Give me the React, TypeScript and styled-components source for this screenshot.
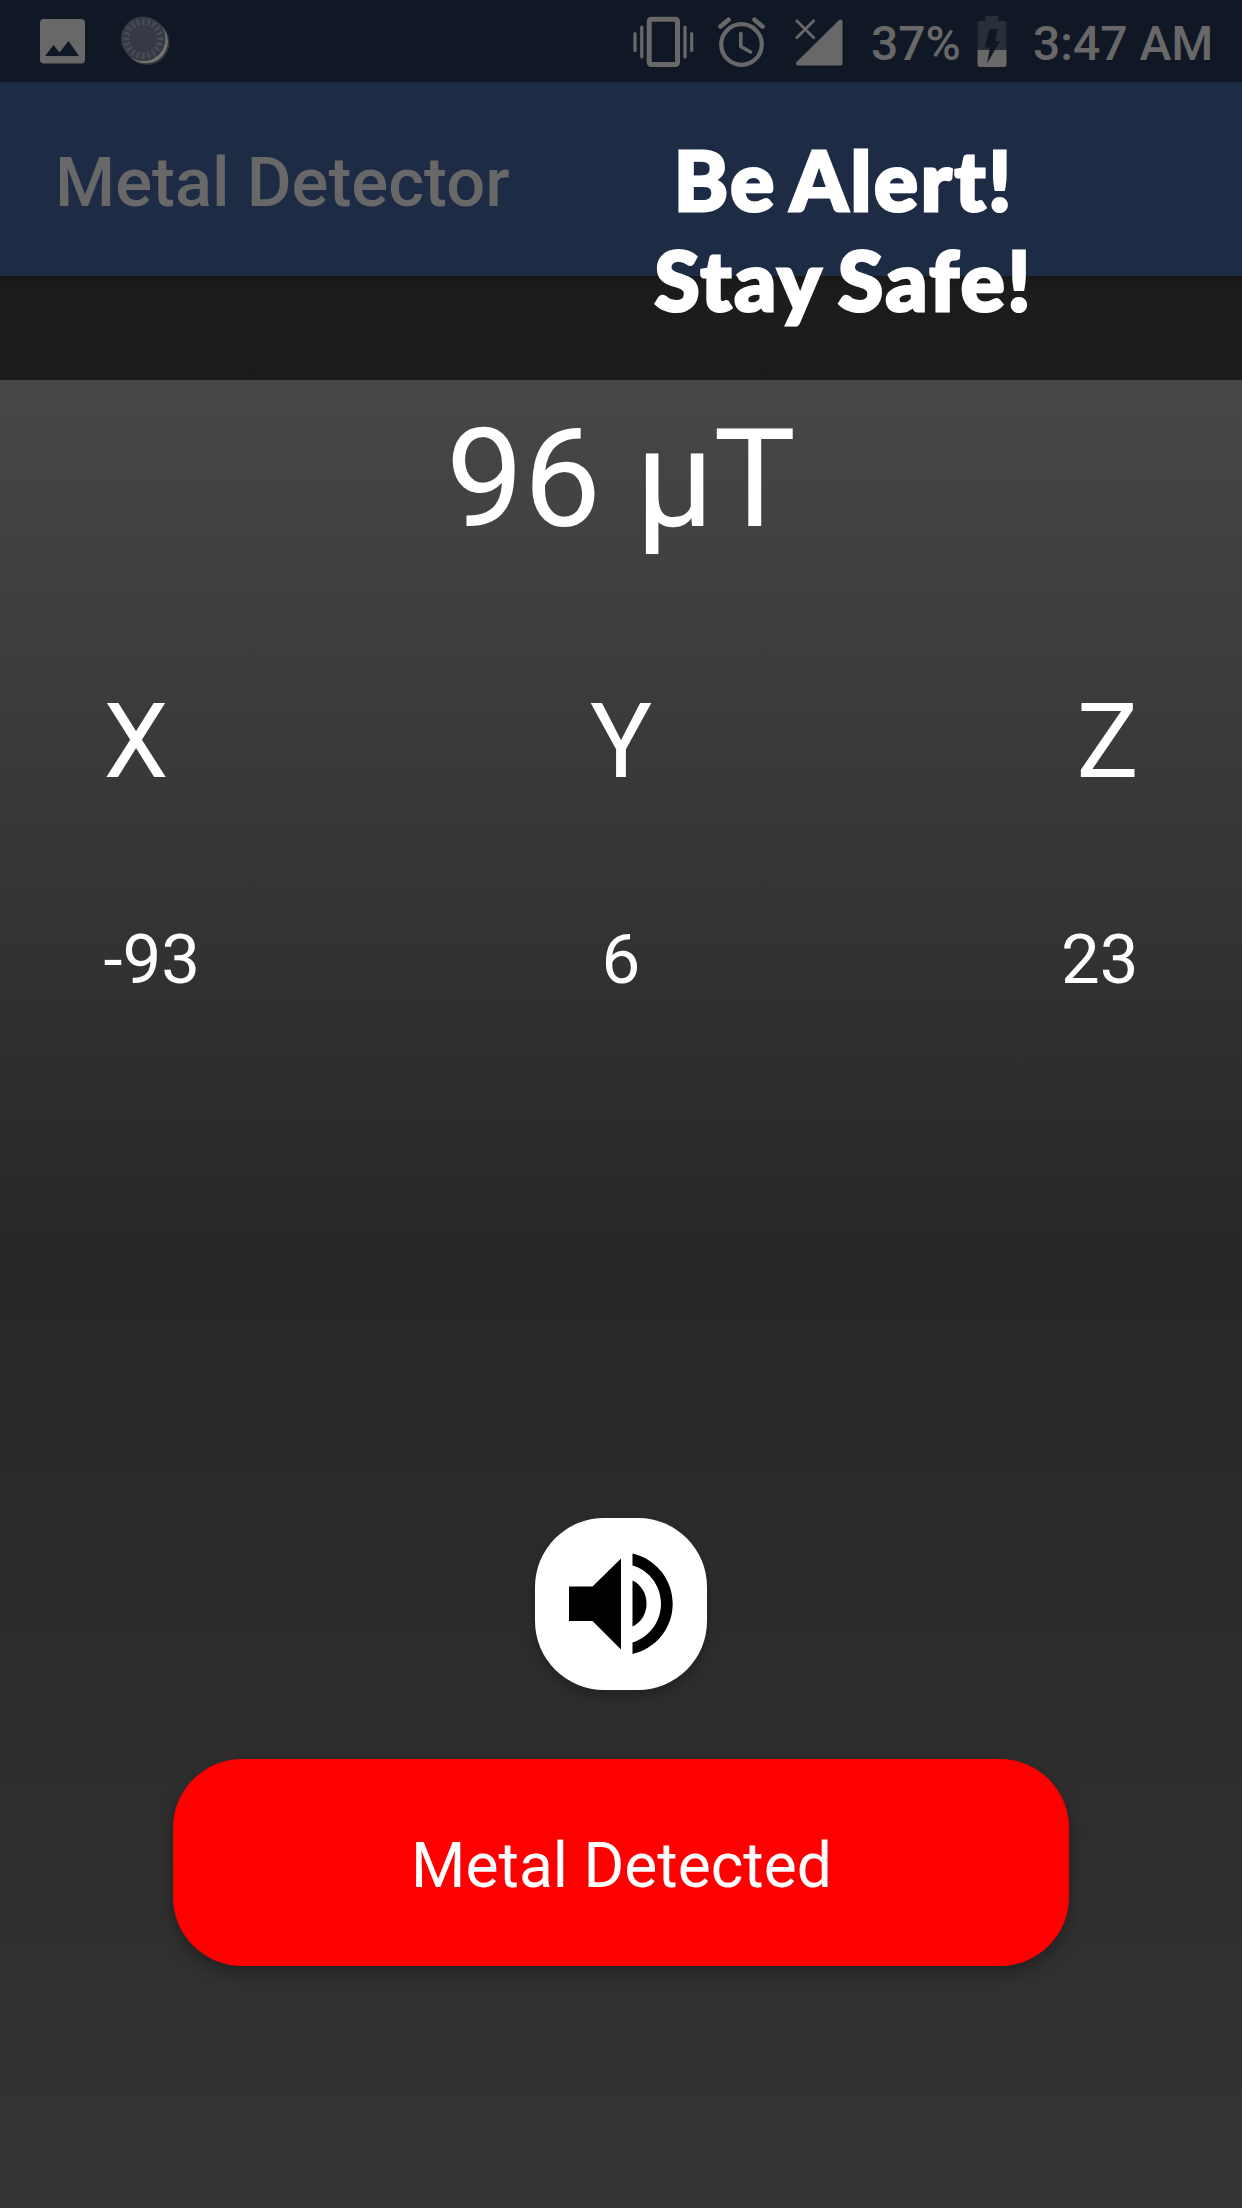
import React from "react";
import styled, { createGlobalStyle } from "styled-components";

const Global = createGlobalStyle`
  *, *::before, *::after { box-sizing: border-box; }
  body { margin: 0; background: #1c1c1c; font-family: Roboto, "Noto Sans", sans-serif; }
`;

const Screen = styled.div`
  position: relative;
  display: flex;
  flex-direction: column;
  width: 1242px;
  height: 2208px;
  overflow: hidden;
  background: #1c1c1c;
`;

const StatusBar = styled.header`
  display: flex;
  align-items: center;
  justify-content: space-between;
  flex: none;
  height: 82px;
  padding: 0 28px 0 40px;
  background: #111825;
  color: #686868;
`;

const StatusGroup = styled.div`
  display: flex;
  align-items: center;
`;

const Glyph = styled.svg<{ $w: number; $gap?: number }>`
  display: block;
  flex: none;
  width: ${(p) => p.$w}px;
  height: 82px;
  margin-right: ${(p) => p.$gap ?? 0}px;
`;

const StatusText = styled.span<{ $gap?: number; $width: number }>`
  width: ${(p) => p.$width}px;
  margin-right: ${(p) => p.$gap ?? 0}px;
  padding-top: 5px;
  font-size: 48px;
  font-weight: 500;
  line-height: 60px;
  white-space: nowrap;
`;

const AppBar = styled.div`
  display: flex;
  align-items: center;
  flex: none;
  height: 194px;
  padding: 7px 56px 0 55px;
  background: #1e2b44;
`;

const Title = styled.h1`
  margin: 0;
  color: #686868;
  font-size: 68.8px;
  font-weight: 500;
  line-height: 84px;
  white-space: nowrap;
`;

const Notice = styled.div`
  position: absolute;
  top: 129px;
  left: 594px;
  width: 500px;
  color: #fff;
  font-family: Lato, sans-serif;
  font-size: 82px;
  font-weight: 900;
  letter-spacing: 2.7px;
  word-spacing: -6px;
  line-height: 100px;
  text-align: center;
  white-space: nowrap;
  -webkit-text-stroke: 3px #fff;
`;

const Strip = styled.div`
  flex: none;
  height: 104px;
  background: linear-gradient(#181818, #1c1c1c 12px, #1b1b1b);
`;

const Panel = styled.main`
  display: flex;
  flex-direction: column;
  align-items: center;
  flex: 1;
  background: linear-gradient(#474747 0%, #272727 48%, #343434 100%);
`;

const Reading = styled.div`
  margin-top: 17px;
  color: #fff;
  font-size: 138px;
  line-height: 164px;
  white-space: nowrap;
`;

const Axes = styled.div<{ $size: number; $top: number; $line: number }>`
  display: grid;
  grid-template-columns: 1fr auto 1fr;
  width: 1035px;
  margin-top: ${(p) => p.$top}px;
  color: #fff;
  font-size: ${(p) => p.$size}px;
  line-height: ${(p) => p.$line}px;

  & > :last-child { text-align: right; }
`;

const SoundButton = styled.button`
  display: flex;
  align-items: center;
  justify-content: center;
  width: 172px;
  height: 172px;
  margin-top: 517px;
  padding: 0;
  border: 0;
  border-radius: 69px;
  background: #fff;
  box-shadow: 0 6px 12px rgba(0, 0, 0, 0.24);
`;

const Alarm = styled.button`
  width: 896px;
  height: 207px;
  margin-top: 69px;
  padding: 6px 0 0 1px;
  border: 0;
  border-radius: 69px;
  background: #f00;
  box-shadow: 0 7px 16px rgba(0, 0, 0, 0.32);
  color: #fff;
  font: 400 62.3px/72px Roboto, sans-serif;
`;

const ticks = Array.from({ length: 20 }, (_, i) => i * 18);

const PictureIcon = () => (
  <Glyph $w={45} $gap={35} viewBox="0 0 45 82">
    <path
      fill="currentColor"
      fillRule="evenodd"
      d="M4 19H41Q45 19 45 23V59.500Q45 63.500 41 63.500H4Q0 63.500 0 59.500V23Q0 19 4 19ZM5 56H39L28.500 41L19.500 52.500L13.500 45Z"
    />
  </Glyph>
);

const SpinnerIcon = () => (
  <Glyph $w={50} viewBox="0 0 50 82">
    <circle cx="27" cy="42.500" r="22.500" fill="#30343e" />
    <circle cx="26" cy="41.500" r="21.800" fill="#74746f" />
    <circle cx="23.300" cy="38.800" r="22.300" fill="#353a45" />
    {ticks.map((a) => (
      <path key={a} d="M23.300 18.500V25" stroke="#474b55" strokeWidth="2.600" transform={`rotate(${a} 23.300 38.800)`} />
    ))}
  </Glyph>
);

const VibrateIcon = () => (
  <Glyph $w={61} $gap={24} viewBox="0 0 61 82">
    <rect x="16.200" y="19.200" width="28.300" height="45.300" rx="2" fill="none" stroke="currentColor" strokeWidth="5" />
    <path d="M2 33.500V50.500M8.800 27V57M52 27V57M58.700 33.500V50.500" stroke="currentColor" strokeWidth="3.200" strokeLinecap="round" />
  </Glyph>
);

const AlarmClockIcon = () => (
  <Glyph $w={48} $gap={29} viewBox="0 0 48 82">
    <g fill="none" stroke="currentColor" strokeLinecap="round" strokeLinejoin="round">
      <circle cx="23.500" cy="44.500" r="20.300" strokeWidth="4.200" />
      <path d="M22.800 33.500V46.500L32.500 52" strokeWidth="3.600" />
      <path d="M2.500 26.500L10.500 19.800M44.500 26.500L36.500 19.800" strokeWidth="4.600" />
    </g>
  </Glyph>
);

const SignalIcon = () => (
  <Glyph $w={48} $gap={28} viewBox="0 0 48 82">
    <path d="M3 63.500L45.500 21.500V63.500Z" fill="currentColor" stroke="currentColor" strokeWidth="4" strokeLinejoin="round" />
    <path d="M1 20L20 39M20 20L1 39" fill="none" stroke="#111825" strokeWidth="5" />
    <path d="M1 20L19.500 38.500M19.500 20L1 38.500" fill="none" stroke="currentColor" strokeWidth="2.800" />
  </Glyph>
);

const BatteryIcon = () => (
  <Glyph $w={30} $gap={26} viewBox="0 0 30 82">
    <path d="M2 21H8.500V16H21V21H27Q29.500 21 29.500 23.500V50H.5V23.500Q.5 21 2 21Z" fill="#2a2e39" />
    <path d="M.5 50H29.500V64.500Q29.500 67 27 67H3Q.5 67 .5 64.500Z" fill="currentColor" />
    <path d="M12 29H21L18 41H23L10 63.500L13 47.500H8Z" fill="#111825" />
  </Glyph>
);

const SpeakerIcon = () => (
  <svg width="104" height="104" viewBox="0 0 104 104" fill="#000">
    <path d="M0 34.500H23.500L52 6.500V97.500L23.500 69H0Z" />
    <path d="M63.500 28.500C72.500 33 77.500 41.500 77.500 51.700C77.500 61.500 72.500 70 63.500 74.500Z" />
    <path d="M63.500 1.500C87 7 103.700 27.500 103.700 51.700C103.700 76 87 96.500 63.500 102V90.500C80.500 85 92 69.500 92 51.700C92 34 80.500 18.500 63.500 13.500Z" />
  </svg>
);

export default function App() {
  return (
    <Screen>
      <Global />
      <StatusBar>
        <StatusGroup>
          <PictureIcon />
          <SpinnerIcon />
        </StatusGroup>
        <StatusGroup>
          <VibrateIcon />
          <AlarmClockIcon />
          <SignalIcon />
          <StatusText $width={90} $gap={16}>37%</StatusText>
          <BatteryIcon />
          <StatusText $width={181}>3:47 AM</StatusText>
        </StatusGroup>
      </StatusBar>
      <AppBar>
        <Title>Metal Detector</Title>
      </AppBar>
      <Strip />
      <Notice>
        Be Alert!
        <br />
        Stay Safe!
      </Notice>
      <Panel>
        <Reading>96 µT</Reading>
        <Axes $size={103.5} $top={120} $line={122}>
          <span>X</span>
          <span>Y</span>
          <span>Z</span>
        </Axes>
        <Axes $size={69} $top={116} $line={82}>
          <span>-93</span>
          <span>6</span>
          <span>23</span>
        </Axes>
        <SoundButton aria-label="Sound">
          <SpeakerIcon />
        </SoundButton>
        <Alarm>Metal Detected</Alarm>
      </Panel>
    </Screen>
  );
}
